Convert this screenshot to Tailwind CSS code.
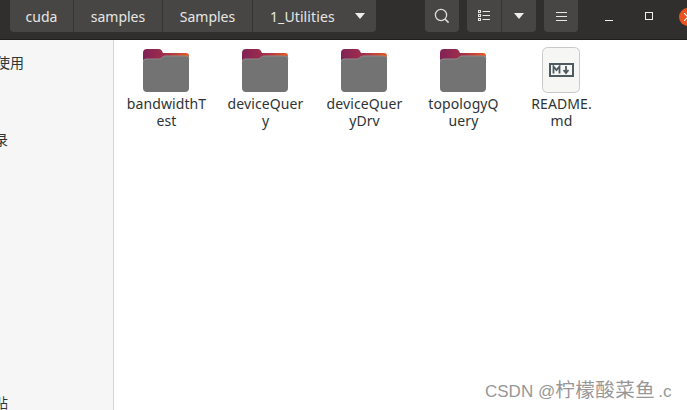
<!DOCTYPE html>
<html lang="en">
<head>
    <meta charset="UTF-8">
    <title>1_Utilities</title>
    <script src="https://cdn.jsdelivr.net/npm/@tailwindcss/browser@4"></script>
</head>
<body class="bg-white overflow-hidden">
    <div class="relative w-[687px] h-[410px] overflow-hidden font-['Noto_Sans','Noto_Sans_CJK_SC',sans-serif]">
        <!-- Header bar -->
        <header class="h-10 bg-[#302f2e] border-b border-[#1f1e1d] flex items-start text-[#e6e6e4] text-[14px]">
            <div class="w-[10px] h-8 bg-[#302f2e]"></div>
            <!-- Path bar -->
            <nav class="flex h-8 w-[366px] bg-[#474644] rounded-b-[4px] items-center">
                <span class="w-[64px] h-8 flex items-center justify-center border-r border-[#353433]">cuda</span>
                <span class="w-[89px] h-8 flex items-center justify-center border-r border-[#353433]">samples</span>
                <span class="w-[90px] h-8 flex items-center justify-center border-r border-[#353433]">Samples</span>
                <span class="flex-1 h-8 flex items-center pl-[17px] tracking-[0.1px]">1_Utilities</span>
                <svg class="w-[10px] h-[6px] mr-[11px]" viewBox="0 0 10 6"><path d="M0 0h10L5 6z" fill="#eeeeec"/></svg>
            </nav>
            <!-- Search -->
            <button class="ml-[49px] w-[34px] h-8 bg-[#474644] rounded-b-[4px] flex items-center justify-center">
                <svg class="w-[16px] h-[16px]" viewBox="0 0 16 16" fill="none" stroke="#dcdcda" stroke-width="1.3"><circle cx="7" cy="7" r="5.6"/><path d="M11 11l3.6 3.6" stroke-width="1.6"/></svg>
            </button>
            <!-- View toggle -->
            <div class="ml-[8px] flex w-[69px] h-8 bg-[#474644] rounded-b-[4px]">
                <button class="w-[35px] h-8 border-r border-[#353433] flex items-center justify-center">
                    <svg class="w-[12px] h-[12px]" viewBox="0 0 12 12" fill="none" stroke="#e6e6e4"><rect x="0.5" y="0.5" width="2" height="2"/><rect x="0.5" y="4.5" width="2" height="2"/><rect x="0.5" y="8.5" width="2" height="2"/><path d="M4.5 1.5H12M4.5 5.5H12M4.5 9.5H12"/></svg>
                </button>
                <button class="flex-1 h-8 flex items-center justify-center">
                    <svg class="w-[10px] h-[6px]" viewBox="0 0 10 6"><path d="M0 0h10L5 6z" fill="#eeeeec"/></svg>
                </button>
            </div>
            <!-- Menu -->
            <button class="ml-[8px] w-[34px] h-8 bg-[#474644] rounded-b-[4px] flex items-center justify-center">
                <svg class="w-[11px] h-[11px]" viewBox="0 0 11 11" stroke="#e6e6e4"><path d="M0 1.5h11M0 5.5h11M0 9.5h11"/></svg>
            </button>
            <!-- Window controls -->
            <div class="ml-[27px] h-8 flex items-center">
                <svg class="w-[8px] h-[8px] mt-[2px]" viewBox="0 0 8 8" stroke="#eeeeec"><path d="M0 7.5h8"/></svg>
                <svg class="ml-[32px] w-[8px] h-[8px]" viewBox="0 0 8 8" fill="none" stroke="#eeeeec"><rect x="0.5" y="0.5" width="7" height="7"/></svg>
            </div>
        </header>
        <div class="absolute left-[679px] top-[8px] w-[18px] h-[18px] rounded-full bg-[#e95420] flex items-center justify-center">
            <svg class="w-[8px] h-[8px] mr-[1px]" viewBox="0 0 8 8" stroke="#fff" stroke-width="1.2"><path d="M0 0l8 8M8 0L0 8"/></svg>
        </div>

        <div class="flex h-[370px]">
            <!-- Sidebar, clipped on the left by the crop -->
            <aside class="w-[114px] shrink-0 bg-[#f6f6f6] border-r border-[#d6d6d4] overflow-hidden text-[14px] leading-[20px] text-[#2e3436] font-['Noto_Sans_CJK_SC',sans-serif]">
                <p class="mt-[12px] ml-[-4px]">使用</p>
                <p class="mt-[57px] ml-[-6px]">录</p>
                <p class="mt-[243px] ml-[-6px]">贴</p>
            </aside>

            <!-- File grid -->
            <main class="flex-1 flex items-start pl-[3px] pt-[7px] text-[14px] leading-[17px] text-[#2e3436] tracking-[0.1px]">
                <div class="w-[99px] flex flex-col items-center">
                    <svg class="w-[48px] h-[48px]" viewBox="1 0 48 48"><defs><linearGradient id="top" x1="0" x2="1" y1="0" y2="0"><stop offset="0" stop-color="#7f2257"/><stop offset="0.5" stop-color="#a32f4a"/><stop offset="1" stop-color="#ea5a20"/></linearGradient></defs><path d="M1 6a4 4 0 0 1 4-4h12a4 4 0 0 1 3 2l1 2h23a3 3 0 0 1 3 3v12H1z" fill="url(#top)"/><path d="M1 15a3 3 0 0 1 3-3h13c3 0 3-3 6-3h21a3 3 0 0 1 3 3v29a4 4 0 0 1-4 4H5a4 4 0 0 1-4-4z" fill="#737373"/><path d="M1 15a3 3 0 0 1 3-3h13c3 0 3-3 6-3h21a3 3 0 0 1 3 3" fill="none" stroke="#8c8c8c"/></svg>
                    <p class="text-center">bandwidthT<br>est</p>
                </div>
                <div class="w-[99px] flex flex-col items-center">
                    <svg class="w-[48px] h-[48px]" viewBox="1 0 48 48"><path d="M1 6a4 4 0 0 1 4-4h12a4 4 0 0 1 3 2l1 2h23a3 3 0 0 1 3 3v12H1z" fill="url(#top)"/><path d="M1 15a3 3 0 0 1 3-3h13c3 0 3-3 6-3h21a3 3 0 0 1 3 3v29a4 4 0 0 1-4 4H5a4 4 0 0 1-4-4z" fill="#737373"/><path d="M1 15a3 3 0 0 1 3-3h13c3 0 3-3 6-3h21a3 3 0 0 1 3 3" fill="none" stroke="#8c8c8c"/></svg>
                    <p class="text-center">deviceQuer<br>y</p>
                </div>
                <div class="w-[99px] flex flex-col items-center">
                    <svg class="w-[48px] h-[48px]" viewBox="1 0 48 48"><path d="M1 6a4 4 0 0 1 4-4h12a4 4 0 0 1 3 2l1 2h23a3 3 0 0 1 3 3v12H1z" fill="url(#top)"/><path d="M1 15a3 3 0 0 1 3-3h13c3 0 3-3 6-3h21a3 3 0 0 1 3 3v29a4 4 0 0 1-4 4H5a4 4 0 0 1-4-4z" fill="#737373"/><path d="M1 15a3 3 0 0 1 3-3h13c3 0 3-3 6-3h21a3 3 0 0 1 3 3" fill="none" stroke="#8c8c8c"/></svg>
                    <p class="text-center">deviceQuer<br>yDrv</p>
                </div>
                <div class="w-[99px] flex flex-col items-center">
                    <svg class="w-[48px] h-[48px]" viewBox="1 0 48 48"><path d="M1 6a4 4 0 0 1 4-4h12a4 4 0 0 1 3 2l1 2h23a3 3 0 0 1 3 3v12H1z" fill="url(#top)"/><path d="M1 15a3 3 0 0 1 3-3h13c3 0 3-3 6-3h21a3 3 0 0 1 3 3v29a4 4 0 0 1-4 4H5a4 4 0 0 1-4-4z" fill="#737373"/><path d="M1 15a3 3 0 0 1 3-3h13c3 0 3-3 6-3h21a3 3 0 0 1 3 3" fill="none" stroke="#8c8c8c"/></svg>
                    <p class="text-center">topologyQ<br>uery</p>
                </div>
                <div class="w-[99px] flex flex-col items-center">
                    <svg class="w-[48px] h-[48px]" viewBox="0 0 48 48"><rect x="3.500" y="0.5" width="37" height="45" rx="5" fill="#f6f6f5" stroke="#c9c9c7"/><rect x="11" y="17" width="23" height="12" fill="none" stroke="#4d5a5e" stroke-width="2"/><path d="M14.5 26.5v-7l3 3.5 3-3.5v7" fill="none" stroke="#4d5a5e" stroke-width="1.8"/><path d="M27 19v6M24.500 23l2.500 3 2.500-3" fill="none" stroke="#4d5a5e" stroke-width="1.8"/></svg>
                    <p class="text-center -ml-[2px]">README.<br>md</p>
                </div>
            </main>
        </div>

        <!-- Watermark over the screenshot -->
        <p class="absolute left-[485px] top-[377px] text-[17px] leading-[24px] text-[#979797] whitespace-nowrap font-['Liberation_Sans',sans-serif]">CSDN @<span class="text-[19.5px] tracking-[0.5px] font-['Noto_Sans_CJK_SC',sans-serif]">柠檬酸菜鱼</span><span class="ml-[3px]">.c</span></p>
    </div>
</body>
</html>
